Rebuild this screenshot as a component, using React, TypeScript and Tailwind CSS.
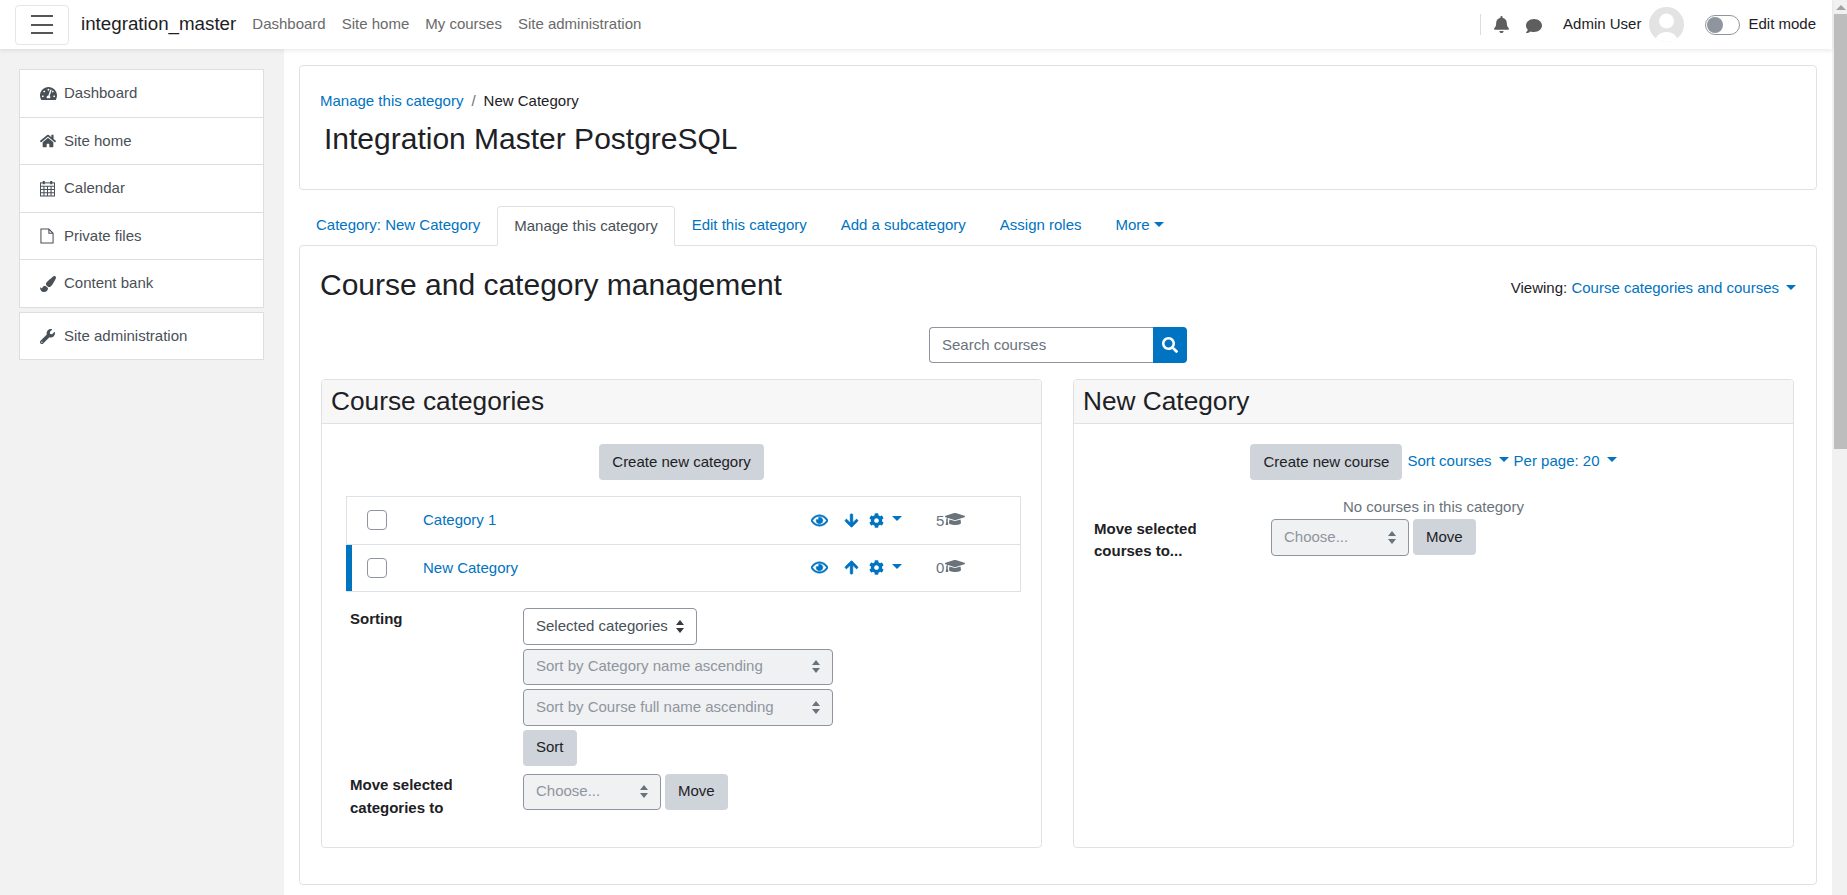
import React from "react";
import {
  FaArrowDown,
  FaArrowUp,
  FaBell,
  FaCog,
  FaComment,
  FaGraduationCap,
  FaHome,
  FaPaintBrush,
  FaRegEye,
  FaSearch,
  FaTachometerAlt,
  FaWrench,
} from "react-icons/fa";

const LINK = "text-[#0073c1]";

const Caret = ({ className = "" }: { className?: string }) => (
  <span
    className={`inline-block w-0 h-0 border-x-[5px] border-x-transparent border-t-[5px] border-t-[#0073c1] ${className}`}
  />
);

const CalendarIcon = () => (
  <svg viewBox="0 0 16 17" className="w-[15px] h-[17px]" fill="none" stroke="#495057" strokeWidth="1.1">
    <rect x="0.5" y="2.5" width="15" height="14" />
    <path d="M0.5 6h15M0.5 9.5h15M0.5 13h15M4.2 6v10.5M8 6v10.5M11.8 6v10.5" />
    <path d="M4 0.5v3.5M12 0.5v3.5" strokeWidth="2.2" />
  </svg>
);

const FileIcon = () => (
  <svg viewBox="0 0 15 16" className="w-[14px] h-[16px]" fill="none" stroke="#495057" strokeWidth="1.1">
    <path d="M1 .6h8.5l4.5 4.5v10.3H1zM9.5 .6v4.5H14" />
  </svg>
);

const SelectArrows = ({ color = "#343a40" }: { color?: string }) => (
  <svg viewBox="0 0 8 13" className="w-2 h-[13px] shrink-0">
    <path d="M4 0 8 5H0zM4 13 0 8h8z" fill={color} />
  </svg>
);

const Select = ({
  label,
  width,
  disabled = false,
}: {
  label: string;
  width: string;
  disabled?: boolean;
}) => (
  <div
    className={`flex items-center justify-between h-[36.5px] pl-[12px] pr-[12px] border border-[#8f959e] rounded-[4px] ${width} ${
      disabled ? "bg-[#eff1f3] text-[#8f959e]" : "bg-white text-[#495057]"
    }`}
  >
    <span className="-mt-[2px]">{label}</span>
    <SelectArrows color={disabled ? "#6a737b" : "#343a40"} />
  </div>
);

const Button = ({ children, className = "" }: { children: React.ReactNode; className?: string }) => (
  <button className={`h-9 px-[13px] pb-[2px] bg-[#ced4da] text-[#1d2125] rounded-[4px] ${className}`}>
    {children}
  </button>
);

const navItems = [
  { icon: <FaTachometerAlt size={17} />, label: "Dashboard", h: "h-[48px]" },
  { icon: <FaHome size={16} />, label: "Site home", h: "h-[47px]" },
  { icon: <CalendarIcon />, label: "Calendar", h: "h-[48px]" },
  { icon: <FileIcon />, label: "Private files", h: "h-[47px]" },
  { icon: <FaPaintBrush size={16} />, label: "Content bank", h: "h-[47px]" },
];

const SideRow = ({ icon, label, h }: { icon: React.ReactNode; label: string; h: string }) => (
  <div className={`flex items-center pl-[20px] text-[#495057] ${h}`}>
    <span className="w-[24px] flex items-center">{icon}</span>
    <span className="-mt-[2px]">{label}</span>
  </div>
);

const CategoryRow = ({
  name,
  count,
  up = false,
  current = false,
}: {
  name: string;
  count: number;
  up?: boolean;
  current?: boolean;
}) => (
  <div
    className={`flex items-center ${
      current
        ? "h-[46.5px] border-l-[6px] border-l-[#0073c1] -ml-px pl-[15px]"
        : "h-[47.5px] pl-[20px] border-b border-[#dee2e6]"
    }`}
  >
    <span className="w-5 h-5 bg-white border border-[#8f959e] rounded-[4px]" />
    <span className={`ml-[36px] w-[388px] ${LINK} ${current ? "" : "-mt-[2px]"}`}>{name}</span>
    <FaRegEye size={17} stroke="currentColor" strokeWidth={20} className="text-[#0073c1]" />
    <span className="ml-[16px] w-[15px]">
      {up ? (
        <FaArrowUp size={15} stroke="currentColor" strokeWidth={30} className="text-[#0073c1]" />
      ) : (
        <FaArrowDown size={15} stroke="currentColor" strokeWidth={30} className="text-[#0073c1]" />
      )}
    </span>
    <FaCog size={15} className="ml-[10px] text-[#0073c1]" />
    <Caret className="ml-[8px] -mt-[3px]" />
    <span className="ml-[34px] text-[#6a737b] w-[9px]">{count}</span>
    <FaGraduationCap size={20} className="-mt-[3px] text-[#6a737b]" />
  </div>
);

const Tab = ({ label, active = false }: { label: string; active?: boolean }) =>
  active ? (
    <div className="relative z-10 flex items-center h-10 pb-[2px] px-[16px] bg-white border border-b-white border-[#dee2e6] rounded-t-[4px] text-[#495057]">
      {label}
    </div>
  ) : (
    <div className={`flex items-center h-10 pb-[3px] px-[17px] ${LINK}`}>{label}</div>
  );

export default function App() {
  return (
    <div className="flex h-[895px] overflow-hidden bg-white text-[15px] leading-[23px] text-[#1d2125] font-['Liberation_Sans',Arial,sans-serif]">
      <div className="flex-1 flex flex-col min-w-0">
        {/* Navbar */}
        <header className="relative z-20 flex items-center h-[49px] shrink-0 pl-[15px] pr-[16px] bg-white shadow-[0_2px_4px_rgba(0,0,0,0.08)]">
          <button className="flex flex-col justify-center gap-[6.5px] w-[54px] h-[40px] px-[15px] border border-[#e6e6e6] rounded-[4px]">
            <span className="h-[2px] bg-[#555]" />
            <span className="h-[2px] bg-[#555]" />
            <span className="h-[2px] bg-[#555]" />
          </button>
          <span className="ml-[12px] -mt-[2px] text-[18.75px]">integration_master</span>
          <nav className="flex gap-4 ml-4 -mt-[2px] text-[#6a6a6a]">
            <span>Dashboard</span>
            <span>Site home</span>
            <span>My courses</span>
            <span>Site administration</span>
          </nav>
          <div className="flex items-center ml-auto">
            <span className="w-px h-[21px] -mt-px bg-[#dcdcdc]" />
            <FaBell size={17} className="ml-[12px] text-[#5e5e5e]" />
            <FaComment size={16} className="ml-[16px] mt-[2px] text-[#5e5e5e]" />
            <span className="ml-[21px] -mt-[3px]">Admin User</span>
            <span className="ml-[8px] w-[35px] h-[35px] rounded-full overflow-hidden bg-[#e3e3e3]">
              <svg viewBox="0 0 35 35" className="w-full h-full" fill="#fff">
                <circle cx="17.5" cy="14" r="7.5" />
                <ellipse cx="17.5" cy="36" rx="12" ry="11" />
              </svg>
            </span>
            <span className="flex items-center ml-[21px] w-[35px] h-5 px-px border border-[#8f959e] rounded-full">
              <span className="w-4 h-4 rounded-full bg-[#8f959e]" />
            </span>
            <span className="ml-[8px] -mt-[2px]">Edit mode</span>
          </div>
        </header>

        <div className="flex flex-1 min-h-0">
          {/* Sidebar */}
          <aside className="w-[284px] shrink-0 bg-[#f2f2f2] pt-[20px] pl-[19px]">
            <div className="w-[245px] bg-white border border-[#dedede] divide-y divide-[#dedede]">
              {navItems.map((item) => (
                <SideRow key={item.label} {...item} />
              ))}
            </div>
            <div className="w-[245px] mt-[4px] bg-white border border-[#dedede]">
              <SideRow icon={<FaWrench size={15} />} label="Site administration" h="h-[46px]" />
            </div>
          </aside>

          {/* Main */}
          <main className="flex-1 min-w-0 pt-[16px] px-[15px]">
            <section className="h-[125px] pt-[23px] pl-[20px] bg-white border border-[#dee2e6] rounded-[4px]">
              <div className="flex">
                <span className={LINK}>Manage this category</span>
                <span className="mx-[8px] text-[#6a737b]">/</span>
                <span>New Category</span>
              </div>
              <h1 className="mt-[9px] ml-[4px] text-[30px] leading-[36px]">Integration Master PostgreSQL</h1>
            </section>

            <div className="flex mt-[16px]">
              <Tab label="Category: New Category" />
              <Tab label="Manage this category" active />
              <Tab label="Edit this category" />
              <Tab label="Add a subcategory" />
              <Tab label="Assign roles" />
              <div className={`flex items-center h-10 pb-[3px] px-[17px] ${LINK}`}>
                More
                <Caret className="ml-[4px]" />
              </div>
            </div>

            <section className="-mt-px h-[640px] pt-[22px] pl-[20px] pr-[20px] bg-white border border-[#dee2e6] rounded-[4px]">
              <div className="flex justify-between">
                <h2 className="text-[30px] leading-[34px]">Course and category management</h2>
                <div className="mt-[8px]">
                  Viewing: <span className={LINK}>Course categories and courses</span>
                  <Caret className="ml-[7px] mb-[3px]" />
                </div>
              </div>

              <div className="flex justify-center mt-[25px]">
                <div className="flex items-center w-[224px] h-9 pl-[12px] pb-[2px] border border-r-0 border-[#8f959e] rounded-l-[4px] text-[#6a737b]">
                  Search courses
                </div>
                <button className="flex items-center justify-center w-[34px] h-9 bg-[#0073c1] rounded-r-[4px] text-white">
                  <FaSearch size={16} />
                </button>
              </div>

              <div className="flex mt-[16px] ml-[1px]">
                {/* Categories panel */}
                <div className="w-[721px] h-[469px] border border-[#dee2e6] rounded-[4px]">
                  <h3 className="flex items-center h-[44px] pl-[9px] bg-[#f7f7f7] border-b border-[#dee2e6] rounded-t-[4px] text-[26.25px]">
                    Course categories
                  </h3>
                  <div className="flex justify-center mt-[20px]">
                    <Button>Create new category</Button>
                  </div>
                  <div className="w-[675px] ml-[24px] mt-[16px] border border-[#dee2e6]">
                    <CategoryRow name="Category 1" count={5} />
                    <CategoryRow name="New Category" count={0} up current />
                  </div>
                  <div className="flex items-start mt-[16px] ml-[28px]">
                    <span className="w-[173px] -mt-px font-bold">Sorting</span>
                    <div className="flex flex-col items-start gap-[4px]">
                      <Select label="Selected categories" width="w-[174px]" />
                      <Select label="Sort by Category name ascending" width="w-[310px]" disabled />
                      <Select label="Sort by Course full name ascending" width="w-[310px]" disabled />
                      <Button>Sort</Button>
                    </div>
                  </div>
                  <div className="flex items-start mt-[8px] ml-[28px]">
                    <span className="w-[173px] -mt-px font-bold">
                      Move selected
                      <br />
                      categories to
                    </span>
                    <Select label="Choose..." width="w-[138px]" disabled />
                    <Button className="ml-[4px] h-[36.5px]">Move</Button>
                  </div>
                </div>

                {/* Courses panel */}
                <div className="w-[721px] h-[469px] ml-[31px] border border-[#dee2e6] rounded-[4px]">
                  <h3 className="flex items-center h-[44px] pl-[9px] bg-[#f7f7f7] border-b border-[#dee2e6] rounded-t-[4px] text-[26.25px]">
                    New Category
                  </h3>
                  <div className="flex justify-center items-start mt-[20px]">
                    <Button>Create new course</Button>
                    <span className={`ml-[5px] mt-[5px] ${LINK}`}>Sort courses</span>
                    <Caret className="ml-[7px] mt-[13px]" />
                    <span className={`ml-[5px] mt-[5px] ${LINK}`}>Per page: 20</span>
                    <Caret className="ml-[7px] mt-[13px]" />
                  </div>
                  <div className="mt-[15px] mb-px text-center text-[#6a737b]">No courses in this category</div>
                  <div className="flex items-start pl-[20px]">
                    <span className="w-[177px] -mt-px leading-[22px] font-bold">
                      Move selected
                      <br />
                      courses to...
                    </span>
                    <Select label="Choose..." width="w-[138px]" disabled />
                    <Button className="ml-[4px]">Move</Button>
                  </div>
                </div>
              </div>
            </section>
          </main>
        </div>
      </div>

      {/* Page scrollbar */}
      <div className="w-[15px] shrink-0 pl-[2px] bg-[#f1f1f1]">
        <div className="flex justify-center items-center h-[14px]">
          <span className="w-0 h-0 border-x-[5px] border-x-transparent border-b-[5px] border-b-[#a3a3a3]" />
        </div>
        <div className="h-[435px] bg-[#bdbdbd]" />
      </div>
    </div>
  );
}
